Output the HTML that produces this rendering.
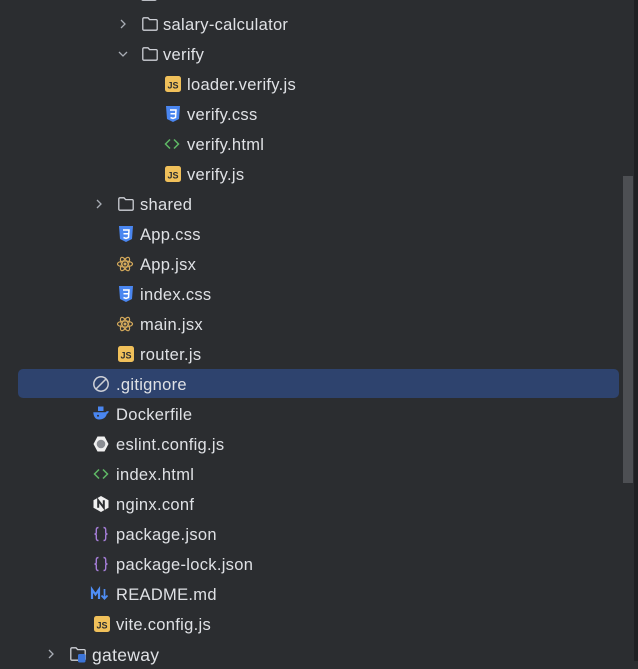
<!DOCTYPE html>
<html><head><meta charset="utf-8"><style>
html,body{margin:0;padding:0;}
body{width:638px;height:661px;background:#2b2d30;position:relative;overflow:hidden;font-family:"Liberation Sans",sans-serif;}
.r{position:absolute;left:0;height:30px;width:620px;}
.r svg{position:absolute;top:7px;width:16px;height:16px;overflow:visible;}
.r span{position:absolute;top:7px;font-size:16.5px;letter-spacing:0.3px;color:#dfe1e5;line-height:18px;white-space:nowrap;}
.sel{position:absolute;left:18px;top:369px;width:601px;height:29px;background:#2e436e;border-radius:5px;}
.sb{position:absolute;left:623px;top:176px;width:10px;height:307px;background:#4d4f53;}
.edge{position:absolute;left:634px;top:0;width:4px;height:661px;background:#1f2023;}
</style></head><body>
<div class="sel"></div>
<div class="sb"></div>
<div class="edge"></div>

<svg width="0" height="0" style="position:absolute">
<defs>
<g id="cr"><path d="M6 4L10 8L6 12" fill="none" stroke="#a8adb5" stroke-width="1.3"/></g>
<g id="cd"><path d="M4 6L8 10L12 6" fill="none" stroke="#a8adb5" stroke-width="1.3"/></g>
<g id="fo"><path d="M0.8 3Q0.8 1.8 2 1.8H6L7.6 3.6H14Q15.2 3.6 15.2 4.8V13Q15.2 14.2 14 14.2H2Q0.8 14.2 0.8 13Z" fill="none" stroke="#ced0d6" stroke-width="1.3"/></g>
<g id="js"><rect x="0" y="0" width="16" height="16" rx="2.5" fill="#f0c05a"/><text x="8" y="12.5" font-size="9" font-weight="bold" text-anchor="middle" fill="#2b2d30" font-family="Liberation Sans">JS</text></g>
<g id="css"><path d="M1 0H15L14 13L8 16L2 13Z" fill="#4a86f0"/><path d="M5 4H11L10.5 11.5L8 12.5L5.5 11.5M5.5 7.8H10.5" fill="none" stroke="#fff" stroke-width="1.5"/></g>
<g id="ht"><path d="M6 3.5L1.5 8L6 12.5M10 3.5L14.5 8L10 12.5" fill="none" stroke="#5fb865" stroke-width="1.5"/></g>
<g id="re"><g fill="none" stroke="#d4a95b" stroke-width="1.2"><ellipse cx="8" cy="8" rx="7.5" ry="3"/><ellipse cx="8" cy="8" rx="7.5" ry="3" transform="rotate(60 8 8)"/><ellipse cx="8" cy="8" rx="7.5" ry="3" transform="rotate(120 8 8)"/></g><circle cx="8" cy="8" r="1.5" fill="#d4a95b"/></g>
<g id="jn"><path d="M5.5 1.5Q3.3 1.5 3.3 3.8V6.5Q3.3 8 1.5 8Q3.3 8 3.3 9.5V12.2Q3.3 14.5 5.5 14.5M10.5 1.5Q12.7 1.5 12.7 3.8V6.5Q12.7 8 14.5 8Q12.7 8 12.7 9.5V12.2Q12.7 14.5 10.5 14.5" fill="none" stroke="#a67ed9" stroke-width="1.4"/></g>
</defs></svg>

<div class="r" style="top:-21px"><svg viewBox="0 0 16 16" style="left:141px"><use href="#fo"/></svg></div>

<div class="r" style="top:9px"><svg viewBox="0 0 16 16" style="left:115px"><use href="#cr"/></svg><svg viewBox="0 0 16 16" style="left:142px"><use href="#fo"/></svg><span style="left:163px">salary-calculator</span></div>
<div class="r" style="top:39px"><svg viewBox="0 0 16 16" style="left:115px"><use href="#cd"/></svg><svg viewBox="0 0 16 16" style="left:142px"><use href="#fo"/></svg><span style="left:163px">verify</span></div>
<div class="r" style="top:69px"><svg viewBox="0 0 16 16" style="left:165px"><use href="#js"/></svg><span style="left:187px">loader.verify.js</span></div>
<div class="r" style="top:99px"><svg viewBox="0 0 16 16" style="left:165px"><use href="#css"/></svg><span style="left:187px">verify.css</span></div>
<div class="r" style="top:129px"><svg viewBox="0 0 16 16" style="left:164px"><use href="#ht"/></svg><span style="left:187px">verify.html</span></div>
<div class="r" style="top:159px"><svg viewBox="0 0 16 16" style="left:165px"><use href="#js"/></svg><span style="left:187px">verify.js</span></div>
<div class="r" style="top:189px"><svg viewBox="0 0 16 16" style="left:91px"><use href="#cr"/></svg><svg viewBox="0 0 16 16" style="left:118px"><use href="#fo"/></svg><span style="left:140px">shared</span></div>
<div class="r" style="top:219px"><svg viewBox="0 0 16 16" style="left:118px"><use href="#css"/></svg><span style="left:140px">App.css</span></div>
<div class="r" style="top:249px"><svg viewBox="0 0 16 16" style="left:117px"><use href="#re"/></svg><span style="left:140px">App.jsx</span></div>
<div class="r" style="top:279px"><svg viewBox="0 0 16 16" style="left:118px"><use href="#css"/></svg><span style="left:140px">index.css</span></div>
<div class="r" style="top:309px"><svg viewBox="0 0 16 16" style="left:117px"><use href="#re"/></svg><span style="left:140px">main.jsx</span></div>
<div class="r" style="top:339px"><svg viewBox="0 0 16 16" style="left:118px"><use href="#js"/></svg><span style="left:140px">router.js</span></div>
<div class="r" style="top:369px"><svg viewBox="0 0 16 16" style="left:93px"><circle cx="8" cy="8" r="7.2" fill="none" stroke="#ced0d6" stroke-width="1.5"/><path d="M3 13L13 3" stroke="#ced0d6" stroke-width="1.5"/></svg><span style="left:116px">.gitignore</span></div>
<div class="r" style="top:399px"><svg viewBox="0 0 16 16" style="left:93px"><rect x="5" y="0.5" width="5.5" height="4.5" fill="#4a86f0"/><path d="M0.3 6.3H12.5Q13.5 4.8 15.8 5.3Q15.3 7.5 13.9 7.8Q12.5 13.5 6 13.5Q0.8 13.5 0.3 6.3Z" fill="#4a86f0"/><circle cx="5" cy="9.7" r="1" fill="#2b2d30"/></svg><span style="left:116px">Dockerfile</span></div>
<div class="r" style="top:429px"><svg viewBox="0 0 16 16" style="left:93px"><path d="M4.5 0.5H11.5L15.5 8L11.5 15.5H4.5L0.5 8Z" fill="#f0f0f0"/><circle cx="8" cy="8" r="4.3" fill="#8a8d93"/></svg><span style="left:116px">eslint.config.js</span></div>
<div class="r" style="top:459px"><svg viewBox="0 0 16 16" style="left:93px"><use href="#ht"/></svg><span style="left:116px">index.html</span></div>
<div class="r" style="top:489px"><svg viewBox="0 0 16 16" style="left:93px"><path d="M8 0L15.5 4.3V11.7L8 16L0.5 11.7V4.3Z" fill="#f0f0f0"/><path d="M5.2 11.8V4.3L10.8 11.7V4.3" fill="none" stroke="#2b2d30" stroke-width="2"/></svg><span style="left:116px">nginx.conf</span></div>
<div class="r" style="top:519px"><svg viewBox="0 0 16 16" style="left:93px"><use href="#jn"/></svg><span style="left:116px">package.json</span></div>
<div class="r" style="top:549px"><svg viewBox="0 0 16 16" style="left:93px"><use href="#jn"/></svg><span style="left:116px">package-lock.json</span></div>
<div class="r" style="top:579px"><svg viewBox="0 0 20 16" style="left:91px;width:20px"><path d="M1 13V3.5L4.5 8.5L8 3.5V13" fill="none" stroke="#4f8ef5" stroke-width="2.2"/><path d="M13.5 3V12.5M10.5 9.5L13.5 12.7L16.5 9.5" fill="none" stroke="#4f8ef5" stroke-width="1.7"/></svg><span style="left:116px">README.md</span></div>
<div class="r" style="top:609px"><svg viewBox="0 0 16 16" style="left:94px"><use href="#js"/></svg><span style="left:116px">vite.config.js</span></div>
<div class="r" style="top:639px"><svg viewBox="0 0 16 16" style="left:43px"><use href="#cr"/></svg><svg viewBox="0 0 16 16" style="left:70px"><use href="#fo"/><rect x="8" y="8" width="7.5" height="8.5" rx="1.5" fill="#3c74d8"/></svg><span style="left:92px;font-size:17.5px">gateway</span></div>
</body></html>
